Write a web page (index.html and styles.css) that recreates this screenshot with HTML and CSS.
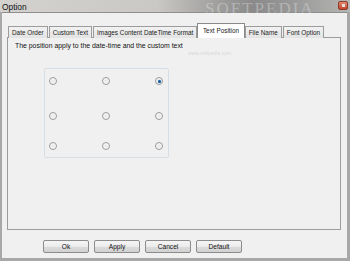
FILE: index.html
```html
<!DOCTYPE html>
<html lang="en">
  <head>
    <meta charset="UTF-8" />
    <title>Option</title>
    <link rel="stylesheet" href="styles.css">
  </head>
  <body>
    <div class="window">
      <!-- Title bar -->
      <div class="titlebar">
        <span class="title">Option</span>
        <span class="close"><span class="close-glyph"></span></span>
      </div>

      <div class="client">
        <!-- Tabs -->
        <div class="tabs">
          <div class="tab">Date Order</div>
          <div class="tab">Custom Text</div>
          <div class="tab">Images Content DateTime Format</div>
          <div class="tab active">Text Position</div>
          <div class="tab">File Name</div>
          <div class="tab">Font Option</div>
        </div>

        <div class="panel">
          <p class="caption">The position apply to the date-time and the custom text</p>
          <div class="group">
            <span class="radio"></span>
            <span class="radio"></span>
            <span class="radio checked"></span>
            <span class="radio"></span>
            <span class="radio"></span>
            <span class="radio"></span>
            <span class="radio"></span>
            <span class="radio"></span>
            <span class="radio"></span>
          </div>
        </div>

        <!-- Dialog buttons -->
        <div class="buttons">
          <button class="btn">Ok</button>
          <button class="btn">Apply</button>
          <button class="btn">Cancel</button>
          <button class="btn">Default</button>
        </div>
      </div>

      <div class="watermark">SOFTPEDIA</div>
      <div class="watermark-url">www.softpedia.com</div>
    </div>
  </body>
</html>
```

FILE: styles.css
```css
/* Page */
body {
  margin: 0;
  width: 350px;
  height: 261px;
  overflow: hidden;
  font-family: "Liberation Sans", Arial, sans-serif;
  font-size: 6.6px;
  color: #000;
  background: #a8a8a8;
}

.window {
  position: relative;
  width: 350px;
  height: 261px;
  display: flex;
  flex-direction: column;
  overflow: hidden;
}

/* Title bar */
.titlebar {
  height: 12px;
  display: flex;
  align-items: center;
  justify-content: space-between;
  padding: 0 2px 0 2px;
  background: linear-gradient(90deg, #d3d2cf 0%, #c9c8c5 45%, #a9a8a6 58%, #8a8a8a 72%, #9a9a9a 85%, #b6b6b4 100%);
}

.title {
  font-size: 8.4px;
  color: #111;
  padding-top: 1px;
}

.close {
  width: 10px;
  height: 9px;
  margin-top: -1px;
  border-radius: 2px;
  background: linear-gradient(#e08a74, #c7432b);
  border: 1px solid #8c3a2a;
  box-sizing: border-box;
  display: flex;
  align-items: center;
  justify-content: center;
}

.close-glyph {
  width: 3px;
  height: 3px;
  background: #e8e0dc;
}

/* Client area */
.client {
  flex: 1;
  margin: 0 3px 3px 2px;
  border-top: 1px solid #8e8e8e;
  background: #f0f0f0;
  padding: 10px 5px 0 5px;
  display: flex;
  flex-direction: column;
}

/* Tabs */
.tabs {
  display: flex;
  align-items: flex-end;
  height: 15px;
  padding-left: 1px;
  position: relative;
  z-index: 1;
  margin-bottom: -1px;
}

.tab {
  height: 12px;
  line-height: 12px;
  padding: 0 3px;
  margin-right: 1px;
  font-size: 6.4px;
  border: 1px solid #9c9c9c;
  border-bottom: none;
  background: linear-gradient(#f2f2f2, #e3e3e3);
  box-sizing: border-box;
  white-space: nowrap;
  color: #222;
}

.tab.active {
  height: 15px;
  line-height: 13px;
  background: #fff;
  margin: 0 0 0 -1px;
  padding: 0 4.5px;
  border-color: #8a8a8a;
}

.panel {
  width: 334px;
  height: 193px;
  box-sizing: border-box;
  border: 1px solid #9c9c9c;
  background: #f0f0f0;
  padding: 4px 0 0 7px;
}

.caption {
  margin: 0;
  font-size: 6.9px;
  color: #111;
}

/* Radio group */
.group {
  margin: 19px 0 0 29px;
  width: 125px;
  height: 90px;
  box-sizing: border-box;
  border: 1px solid #d8dfe4;
  border-radius: 2px;
  padding: 8px 0 0 4px;
  display: grid;
  grid-template-columns: 8px 8px 8px;
  grid-template-rows: 35px 30px 8px;
  column-gap: 45px;
}

.radio {
  width: 8px;
  height: 8px;
  box-sizing: border-box;
  border-radius: 50%;
  border: 1px solid #9a9a9a;
  background: radial-gradient(circle at 50% 50%, #e6e6e6 0, #f6f6f6 60%);
  position: relative;
}

.radio.checked::after {
  content: "";
  position: absolute;
  left: 1.5px;
  top: 1.5px;
  width: 3px;
  height: 3px;
  border-radius: 50%;
  background: #1d5d9b;
  box-shadow: 0 0 1px #3a86c8;
}

/* Buttons */
.buttons {
  display: flex;
  gap: 5px;
  padding: 10px 0 0 36px;
}

.btn {
  width: 46px;
  height: 13px;
  padding: 0;
  font-family: "Liberation Sans", Arial, sans-serif;
  font-size: 6.6px;
  color: #111;
  border: 1px solid #8c8c8c;
  border-radius: 2px;
  background: linear-gradient(#f6f6f6 0%, #ebebeb 50%, #dcdcdc 51%, #d2d2d2 100%);
}

/* Softpedia watermark over the top right */
.watermark {
  position: absolute;
  left: 205px;
  top: 0;
  font-family: "Liberation Serif", serif;
  font-size: 17px;
  line-height: 17px;
  letter-spacing: 2px;
  color: rgba(255, 255, 255, 0.3);
  pointer-events: none;
}

.watermark-url {
  position: absolute;
  left: 188px;
  top: 50px;
  font-size: 5px;
  color: rgba(160, 160, 160, 0.35);
}
```
